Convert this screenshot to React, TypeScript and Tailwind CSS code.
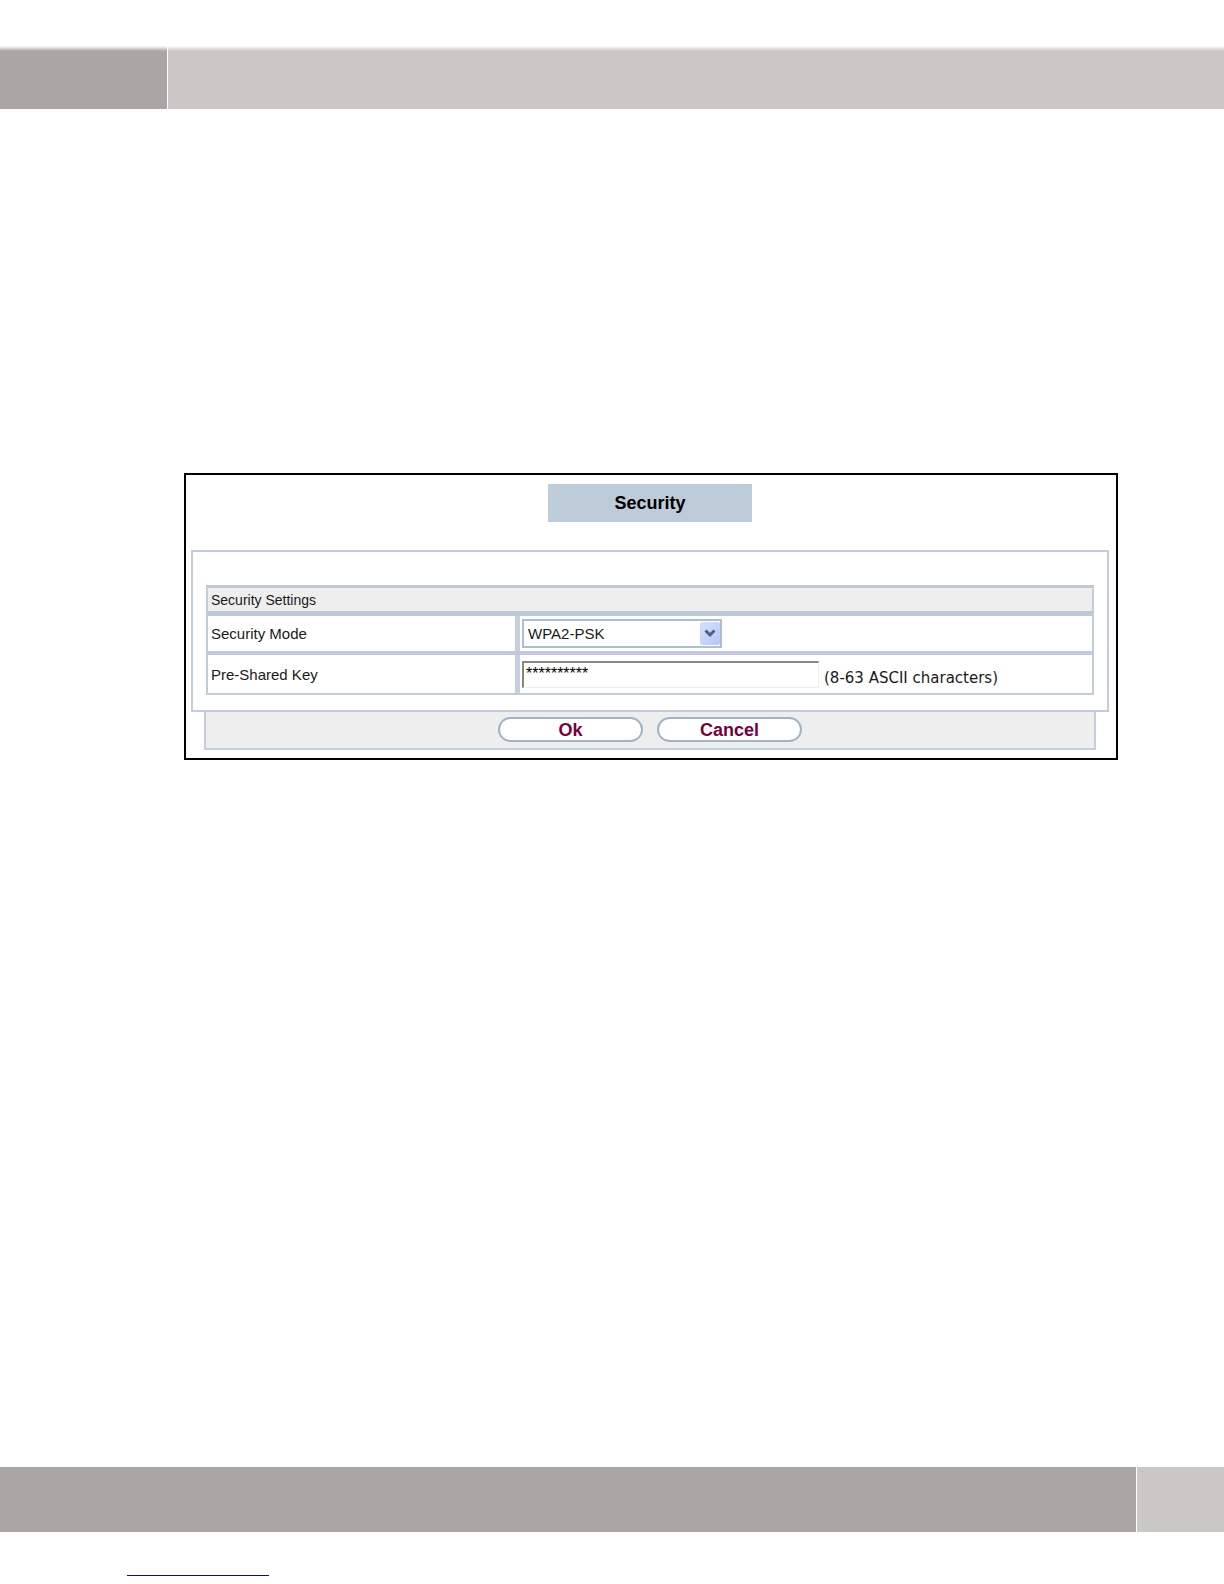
import React, { useState } from 'react';

function TopBar() {
  return (
    <header className="relative mt-[46px] flex h-[63px] gap-px">
      <div className="w-[167px] bg-[#a8a7a5]" />
      <div className="flex-1 bg-[#c9c8c6]" />
      <div className="absolute inset-x-0 top-0 h-[5px] bg-gradient-to-b from-white to-transparent" />
    </header>
  );
}

function BottomBar() {
  return (
    <footer className="mt-auto">
      <div className="flex h-[65px] gap-px">
        <div className="flex-1 bg-[#a8a7a5]" />
        <div className="w-[87px] bg-[#c9c8c6]" />
      </div>
      <div className="ml-[127px] mt-[43px] mb-2 h-px w-[142px] bg-[#100c80]" />
    </footer>
  );
}

const pillButton =
  'h-[25px] w-[145px] rounded-full border-2 border-[#9fb4c6] bg-white text-lg leading-none font-bold text-[#73003f]';

export default function App() {
  const [mode, setMode] = useState('WPA2-PSK');
  const [key, setKey] = useState('**********');

  return (
    <div className="flex min-h-screen flex-col bg-white font-['Liberation_Sans',Arial,sans-serif] text-[#1a1a1a]">
      <TopBar />

      <main className="mt-[364px] mr-[106px] ml-[184px]">
        <form
          onSubmit={e => e.preventDefault()}
          className="border-2 border-black pt-[9px] pr-[7px] pb-2 pl-[5px]"
        >
          <h1 className="mx-auto flex h-[38px] w-[204px] items-center justify-center bg-[#bdccd8] text-lg font-bold text-black">
            Security
          </h1>

          <div className="mt-7 border-2 border-[#c3cbdc] px-[13px] pt-[33px] pb-[15px]">
            <div className="border-2 border-t-[3px] border-[#c1cddb] border-t-[#bfc8d0]">
              <h2 className="h-[23px] bg-[#eeeeee] pl-[3px] text-sm leading-6">Security Settings</h2>

              <div className="flex h-10 border-t-[5px] border-[#bdcad6]">
                <label
                  htmlFor="mode"
                  className="flex w-[312px] items-center border-r-[5px] border-[#c5cfdf] pt-px pl-[3px] text-[15px]"
                >
                  Security Mode
                </label>
                <div className="flex flex-1 items-center pl-[2px]">
                  <div className="relative w-[200px]">
                    <select
                      id="mode"
                      value={mode}
                      onChange={e => setMode(e.target.value)}
                      className="block h-[29px] w-full appearance-none border-2 border-[#a9bfd4] bg-white pt-px pl-1 text-[15px]"
                    >
                      <option>WPA2-PSK</option>
                      <option>WPA-PSK</option>
                      <option>WEP</option>
                      <option>None</option>
                    </select>
                    <span className="pointer-events-none absolute top-[3px] right-[2px] flex h-[23px] w-[20px] items-center justify-center rounded-xs bg-gradient-to-br from-[#d6e0fb] to-[#b4c8f6]">
                      <svg width="12" height="9" viewBox="0 0 12 9" fill="none">
                        <path d="M1.5 1.5L6 6L10.5 1.5" stroke="#4d6185" strokeWidth="3" />
                      </svg>
                    </span>
                  </div>
                </div>
              </div>

              <div className="flex h-[42px] border-t-4 border-[#c4c7df]">
                <label
                  htmlFor="key"
                  className="flex w-[312px] items-start border-r-[5px] border-[#c5cfdf] pt-2 pl-[3px] text-[15px] leading-6"
                >
                  Pre-Shared Key
                </label>
                <div className="flex flex-1 items-center gap-[5px] pl-[2px]">
                  <input
                    id="key"
                    type="text"
                    value={key}
                    onChange={e => setKey(e.target.value)}
                    className="h-[27px] w-[297px] border border-t-2 border-l-2 border-[#f1efe2] border-t-[#8a8781] border-l-[#8a8773] bg-white pb-px pl-[2px] text-base leading-5 text-black"
                  />
                  <span className="pt-2 font-['DejaVu_Sans',Verdana,sans-serif] text-[15px]">
                    (8-63 ASCII characters)
                  </span>
                </div>
              </div>
            </div>
          </div>

          <div className="mx-[13px] flex justify-center gap-[14px] border-2 border-t-0 border-[#c5cedb] bg-[#eeeeee] pt-[5px] pb-[6px]">
            <button type="submit" className={pillButton}>Ok</button>
            <button type="button" className={pillButton}>Cancel</button>
          </div>
        </form>
      </main>

      <BottomBar />
    </div>
  );
}
